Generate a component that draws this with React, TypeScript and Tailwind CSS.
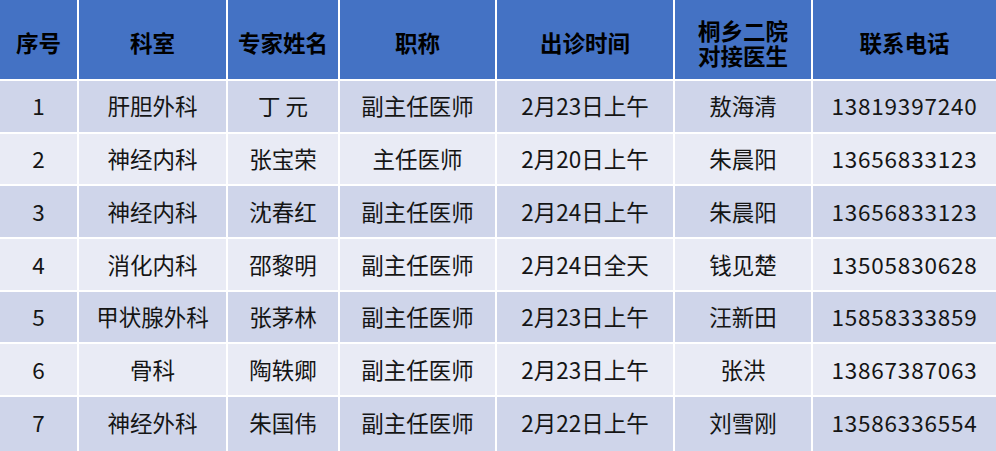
const rows = [
	["1", "肝胆外科", "丁 元", "副主任医师", "2月23日上午", "敖海清", "13819397240"],
	["2", "神经内科", "张宝荣", "主任医师", "2月20日上午", "朱晨阳", "13656833123"],
	["3", "神经内科", "沈春红", "副主任医师", "2月24日上午", "朱晨阳", "13656833123"],
	["4", "消化内科", "邵黎明", "副主任医师", "2月24日全天", "钱见楚", "13505830628"],
	["5", "甲状腺外科", "张茅林", "副主任医师", "2月23日上午", "汪新田", "15858333859"],
	["6", "骨科", "陶轶卿", "副主任医师", "2月23日上午", "张洪", "13867387063"],
	["7", "神经外科", "朱国伟", "副主任医师", "2月22日上午", "刘雪刚", "13586336554"],
];

const headers = ["序号", "科室", "专家姓名", "职称", "出诊时间", "桐乡二院\n对接医生", "联系电话"];

export default function App() {
	return (
		<div
			className="w-[996px] h-[451px] overflow-hidden bg-white"
			style={{ fontFamily: '"Noto Sans CJK SC", "Noto Sans", sans-serif' }}
		>
			<div className="grid h-full grid-cols-[77px_147px_110px_155px_176px_136px_183px] grid-rows-[79px_repeat(6,50.7px)_1fr] gap-[2px]">
				{/* Header */}
				{headers.map((h) => (
					<div
						key={h}
						className="flex items-center justify-center bg-[#4472c4] pt-[6px] text-center text-[22.5px] font-bold leading-[25px] text-black whitespace-pre-line"
					>
						{h}
					</div>
				))}

				{/* Body rows, alternating shades; last row runs to the bottom edge */}
				{rows.map((row, i) =>
					row.map((cell, j) => (
						<div
							key={`${i}-${j}`}
							className={`flex items-center justify-center text-[22.5px] text-[#151515] ${
								i % 2 === 0 ? "bg-[#cfd5ea]" : "bg-[#e9ebf5]"
							} ${j === 6 ? "tracking-[0.8px]" : ""} ${i === rows.length - 1 ? "pb-[3px]" : ""}`}
						>
							{cell}
						</div>
					)),
				)}
			</div>
		</div>
	);
}
